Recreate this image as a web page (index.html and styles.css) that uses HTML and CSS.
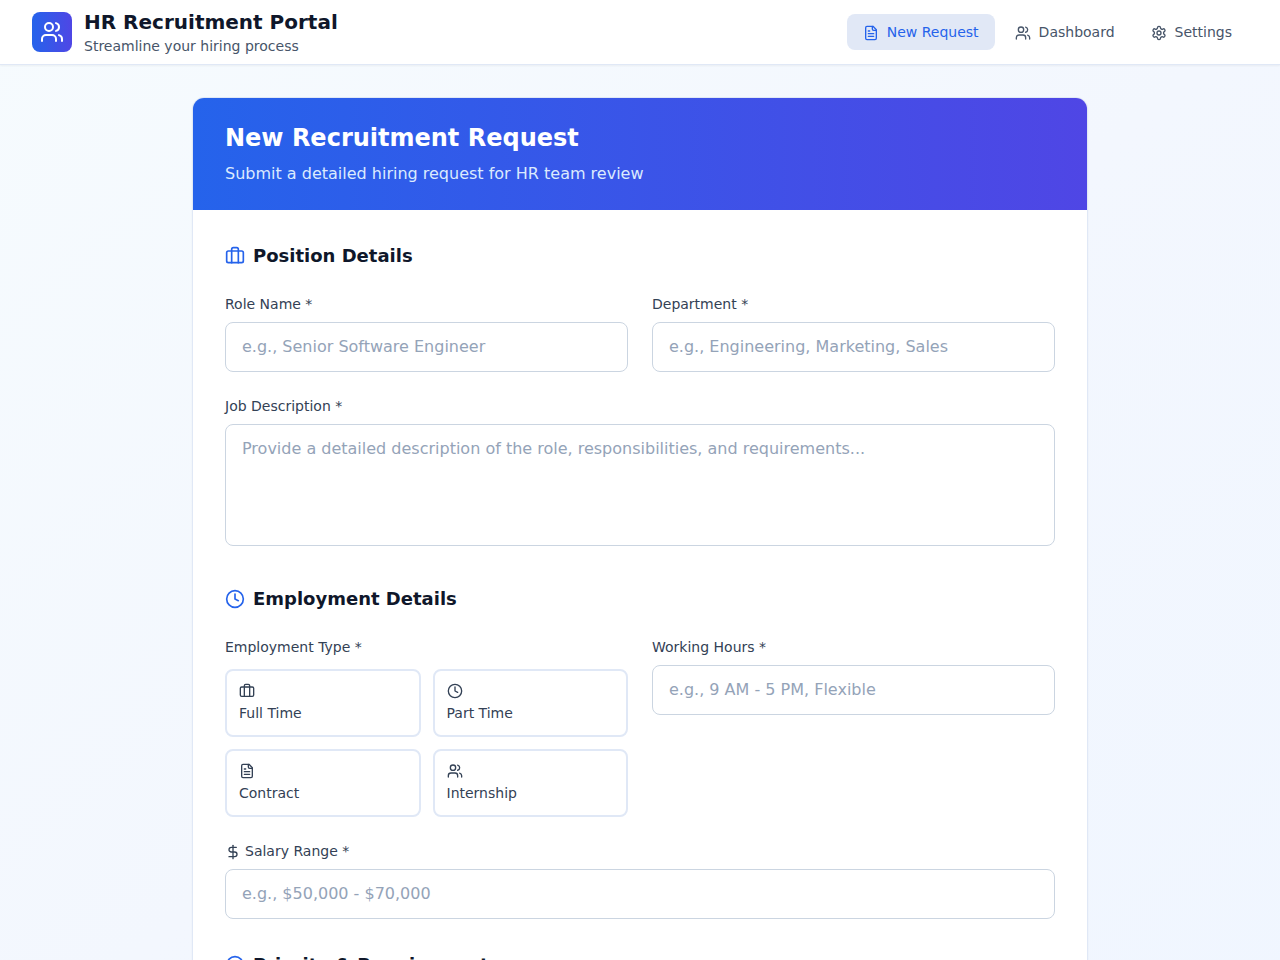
FILE: index.html
```html
<!DOCTYPE html>
<html lang="en">
<head>
<meta charset="utf-8">
<meta name="viewport" content="width=device-width, initial-scale=1">
<title>HR Recruitment Portal</title>
<link rel="stylesheet" href="styles.css">
</head>
<body>
<svg class="sprite" aria-hidden="true">
  <symbol id="users" viewBox="0 0 24 24"><path d="M16 21v-2a4 4 0 0 0-4-4H6a4 4 0 0 0-4 4v2"/><circle cx="9" cy="7" r="4"/><path d="M22 21v-2a4 4 0 0 0-3-3.87"/><path d="M16 3.13a4 4 0 0 1 0 7.75"/></symbol>
  <symbol id="file" viewBox="0 0 24 24"><path d="M15 2H6a2 2 0 0 0-2 2v16a2 2 0 0 0 2 2h12a2 2 0 0 0 2-2V7Z"/><path d="M14 2v4a2 2 0 0 0 2 2h4"/><path d="M10 9H8"/><path d="M16 13H8"/><path d="M16 17H8"/></symbol>
  <symbol id="settings" viewBox="0 0 24 24"><path d="M12.22 2h-.44a2 2 0 0 0-2 2v.18a2 2 0 0 1-1 1.73l-.43.25a2 2 0 0 1-2 0l-.15-.08a2 2 0 0 0-2.73.73l-.22.38a2 2 0 0 0 .73 2.73l.15.1a2 2 0 0 1 1 1.72v.51a2 2 0 0 1-1 1.74l-.15.09a2 2 0 0 0-.73 2.73l.22.38a2 2 0 0 0 2.73.73l.15-.08a2 2 0 0 1 2 0l.43.25a2 2 0 0 1 1 1.73V20a2 2 0 0 0 2 2h.44a2 2 0 0 0 2-2v-.18a2 2 0 0 1 1-1.73l.43-.25a2 2 0 0 1 2 0l.15.08a2 2 0 0 0 2.73-.73l.22-.39a2 2 0 0 0-.73-2.73l-.15-.08a2 2 0 0 1-1-1.74v-.5a2 2 0 0 1 1-1.74l.15-.09a2 2 0 0 0 .73-2.73l-.22-.38a2 2 0 0 0-2.73-.73l-.15.08a2 2 0 0 1-2 0l-.43-.25a2 2 0 0 1-1-1.73V4a2 2 0 0 0-2-2z"/><circle cx="12" cy="12" r="3"/></symbol>
  <symbol id="briefcase" viewBox="0 0 24 24"><rect width="20" height="14" x="2" y="6" rx="2"/><path d="M16 20V4a2 2 0 0 0-2-2h-4a2 2 0 0 0-2 2v16"/></symbol>
  <symbol id="clock" viewBox="0 0 24 24"><circle cx="12" cy="12" r="10"/><path d="M12 6v6l4 2"/></symbol>
  <symbol id="dollar" viewBox="0 0 24 24"><path d="M12 2v20"/><path d="M17 5H9.5a3.5 3.5 0 0 0 0 7h5a3.5 3.5 0 0 1 0 7H6"/></symbol>
  <symbol id="alert" viewBox="0 0 24 24"><circle cx="12" cy="12" r="10"/><path d="M12 8v4"/><path d="M12 16h.01"/></symbol>
</svg>

<header class="topbar">
  <div class="brand">
    <div class="brand-mark"><svg class="icon icon-lg" aria-hidden="true"><use href="#users"/></svg></div>
    <div>
      <h1 class="brand-title">HR Recruitment Portal</h1>
      <p class="brand-sub">Streamline your hiring process</p>
    </div>
  </div>
  <nav class="nav">
    <button type="button" class="nav-item nav-item-active" aria-current="page"><svg class="icon icon-inline" aria-hidden="true"><use href="#file"/></svg>New Request</button>
    <button type="button" class="nav-item"><svg class="icon icon-inline" aria-hidden="true"><use href="#users"/></svg>Dashboard</button>
    <button type="button" class="nav-item"><svg class="icon icon-inline" aria-hidden="true"><use href="#settings"/></svg>Settings</button>
  </nav>
</header>

<main class="main">
  <div class="card">
    <div class="banner">
      <h2 class="banner-title">New Recruitment Request</h2>
      <p class="banner-sub">Submit a detailed hiring request for HR team review</p>
    </div>
    <form class="form">
      <section>
        <h3 class="section-title"><svg class="icon icon-md" aria-hidden="true"><use href="#briefcase"/></svg>Position Details</h3>
        <div class="fields">
          <div>
            <label class="label" for="role">Role Name *</label>
            <input class="control" id="role" type="text" placeholder="e.g., Senior Software Engineer" required>
          </div>
          <div>
            <label class="label" for="department">Department *</label>
            <input class="control" id="department" type="text" placeholder="e.g., Engineering, Marketing, Sales" required>
          </div>
          <div class="wide">
            <label class="label" for="description">Job Description *</label>
            <textarea class="control" id="description" rows="4" placeholder="Provide a detailed description of the role, responsibilities, and requirements..." required></textarea>
          </div>
        </div>
      </section>

      <section>
        <h3 class="section-title"><svg class="icon icon-md" aria-hidden="true"><use href="#clock"/></svg>Employment Details</h3>
        <div class="fields">
          <div role="group" aria-labelledby="type-label">
            <div class="label label-group" id="type-label">Employment Type *</div>
            <div class="options">
              <button type="button" class="option"><svg class="icon" aria-hidden="true"><use href="#briefcase"/></svg><span>Full Time</span></button>
              <button type="button" class="option"><svg class="icon" aria-hidden="true"><use href="#clock"/></svg><span>Part Time</span></button>
              <button type="button" class="option"><svg class="icon" aria-hidden="true"><use href="#file"/></svg><span>Contract</span></button>
              <button type="button" class="option"><svg class="icon" aria-hidden="true"><use href="#users"/></svg><span>Internship</span></button>
            </div>
          </div>
          <div>
            <label class="label" for="hours">Working Hours *</label>
            <input class="control" id="hours" type="text" placeholder="e.g., 9 AM - 5 PM, Flexible" required>
          </div>
          <div class="wide">
            <label class="label" for="salary"><svg class="icon icon-inline icon-tight" aria-hidden="true"><use href="#dollar"/></svg>Salary Range *</label>
            <input class="control" id="salary" type="text" placeholder="e.g., $50,000 - $70,000" required>
          </div>
        </div>
      </section>

      <section>
        <h3 class="section-title"><svg class="icon icon-md" aria-hidden="true"><use href="#alert"/></svg>Priority &amp; Requirements</h3>
      </section>
    </form>
  </div>
</main>
</body>
</html>
```

FILE: styles.css
```css
*,
*::before,
*::after {
  box-sizing: border-box;
  margin: 0;
}

:root {
  --ink: #0f172a;
  --text: #334155;
  --muted: #475569;
  --placeholder: #94a3b8;
  --line: #cbd5e1;
  --line-soft: #e0e8f6;
  --blue: #2563eb;
  --indigo: #4f46e5;
}

body {
  min-height: 100vh;
  font-family: "DejaVu Sans", sans-serif;
  font-size: 16px;
  line-height: 24px;
  color: var(--ink);
  background: linear-gradient(to bottom right, #f6fbfe, #f3f7fe 50%, #f0f6ff);
}

button,
input,
textarea {
  font: inherit;
  color: inherit;
}

.sprite {
  display: none;
}

.icon {
  display: block;
  flex: none;
  width: 16px;
  height: 16px;
  fill: none;
  stroke: currentColor;
  stroke-width: 2;
  stroke-linecap: round;
  stroke-linejoin: round;
}

.icon-inline {
  display: inline-block;
  margin-right: 8px;
  vertical-align: middle;
}

.icon-tight {
  margin-right: 4px;
}

.icon-md {
  width: 20px;
  height: 20px;
  color: var(--blue);
}

.icon-lg {
  width: 24px;
  height: 24px;
}

.topbar {
  display: flex;
  align-items: center;
  justify-content: space-between;
  padding: 8px 32px;
  background: #fff;
  border-bottom: 1px solid var(--line-soft);
  box-shadow: 0 1px 2px rgba(0, 0, 0, 0.05);
}

.brand {
  display: flex;
  align-items: center;
  gap: 12px;
}

.brand-mark {
  padding: 8px;
  color: #fff;
  border-radius: 8px;
  background: linear-gradient(to right, var(--blue), var(--indigo));
}

.brand-title {
  font-size: 20px;
  line-height: 28px;
}

.brand-sub {
  font-size: 14px;
  line-height: 20px;
  color: var(--muted);
}

.nav {
  display: flex;
  gap: 4px;
}

.nav-item {
  padding: 8px 16px;
  border: 0;
  border-radius: 8px;
  background: transparent;
  color: var(--muted);
  font-size: 14px;
  line-height: 20px;
  cursor: pointer;
}

.nav-item-active {
  background: #e1e8f6;
  color: var(--blue);
}

.main {
  max-width: 960px;
  margin: 0 auto;
  padding: 32px;
}

.card {
  overflow: hidden;
  background: #fff;
  border: 1px solid var(--line-soft);
  border-radius: 12px;
  box-shadow: 0 1px 2px rgba(0, 0, 0, 0.05);
}

.banner {
  padding: 24px 32px;
  background: linear-gradient(to right, var(--blue), var(--indigo));
}

.banner-title {
  font-size: 24px;
  line-height: 32px;
  color: #fff;
}

.banner-sub {
  margin-top: 8px;
  color: #dbeafe;
}

.form {
  display: grid;
  gap: 32px;
  padding: 32px;
}

.section-title {
  display: flex;
  align-items: center;
  gap: 8px;
  margin-bottom: 24px;
  font-size: 18px;
  line-height: 28px;
}

.fields {
  display: grid;
  grid-template-columns: 1fr 1fr;
  gap: 24px;
}

.wide {
  grid-column: 1 / -1;
}

.label {
  display: block;
  margin-bottom: 8px;
  font-size: 14px;
  line-height: 20px;
  color: var(--text);
}

.label-group {
  margin-bottom: 12px;
}

.control {
  width: 100%;
  padding: 12px 16px;
  border: 1px solid var(--line);
  border-radius: 8px;
  background: #fff;
}

input.control {
  display: block;
}

textarea.control {
  resize: none;
}

.control::placeholder {
  color: var(--placeholder);
  opacity: 1;
}

.options {
  display: grid;
  grid-template-columns: 1fr 1fr;
  gap: 12px;
}

.option {
  display: flex;
  flex-direction: column;
  align-items: flex-start;
  gap: 4px;
  padding: 12px;
  border: 2px solid var(--line-soft);
  border-radius: 8px;
  background: #fff;
  color: var(--text);
  font-size: 14px;
  line-height: 20px;
  cursor: pointer;
}
```
